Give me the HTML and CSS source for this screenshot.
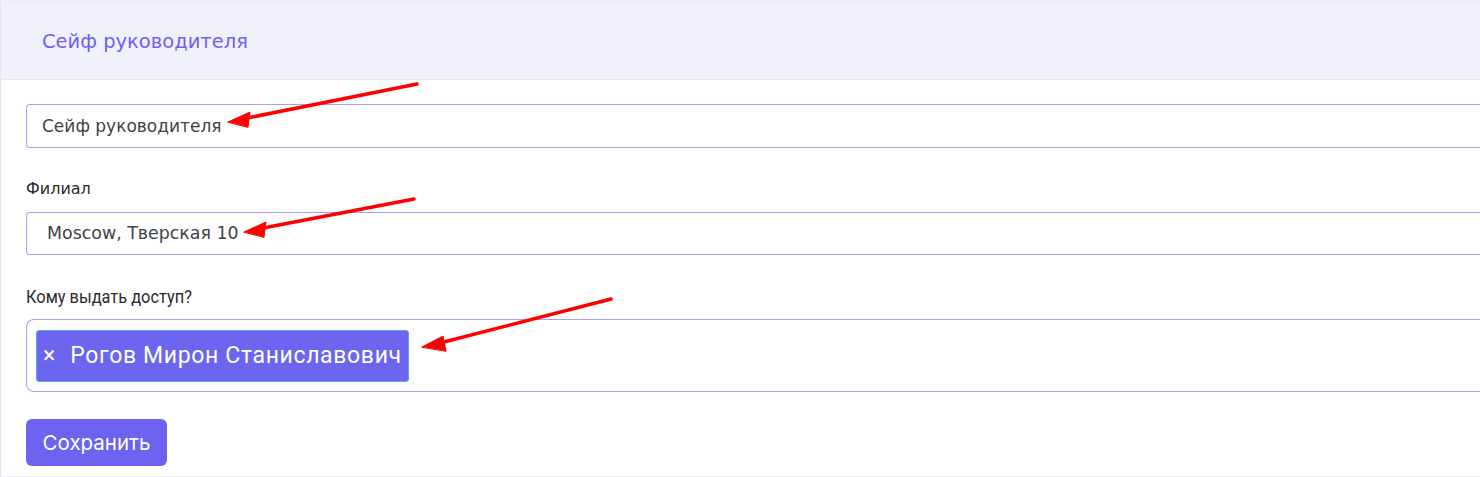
FILE: index.html
```html
<!DOCTYPE html>
<html lang="ru">
<head>
<meta charset="utf-8">
<link rel="stylesheet" href="styles.css">
</head>
<body>
<div class="card">
  <div class="card-header">Сейф руководителя</div>
  <div class="card-body">
    <div class="input">Сейф руководителя</div>
    <div class="label">Филиал</div>
    <div class="input select">Moscow, Тверская 10</div>
    <div class="label label-alt">Кому выдать доступ?</div>
    <div class="multi">
      <span class="tag"><span class="tag-x">×</span>Рогов Мирон Станиславович</span>
    </div>
    <button class="btn">Сохранить</button>
  </div>
</div>
<svg class="arrows" width="1480" height="477" viewBox="0 0 1480 477">
  <g stroke="#ff0000" stroke-width="3.5" stroke-linecap="round" fill="#ff0000">
    <line x1="417" y1="84" x2="242" y2="119"/>
    <polygon points="228,122 250,112 248,127" stroke-width="1"/>
    <line x1="414" y1="199" x2="258" y2="229"/>
    <polygon points="244,232 266,222 264,237" stroke-width="1"/>
    <line x1="611" y1="299" x2="436" y2="344"/>
    <polygon points="422,347 443,336 446,351" stroke-width="1"/>
  </g>
</svg>
</body>
</html>
```
FILE: styles.css
```css
html, body { margin: 0; padding: 0; background: #fff; }
body { width: 1480px; height: 477px; overflow: hidden; position: relative; }
.card {
  border-left: 1px solid #e4e2f7;
  border-top: 1px solid #ebebf5;
  border-bottom: 1px solid #ededf3;
  height: 477px;
  box-sizing: border-box;
}
.card-header {
  background: #f1f1fb;
  height: 79px;
  border-bottom: 1px solid #e5e5f5;
  box-sizing: border-box;
  padding: 29px 0 0 41px;
  font-family: "DejaVu Sans", sans-serif;
  font-size: 19.5px;
  color: #6c63f0;
  line-height: 24px;
}
.card-body { padding: 24px 0 0 25px; }
.label {
  font-family: "DejaVu Sans", sans-serif;
  font-size: 16px;
  color: #2b2b2b;
  line-height: 20px;
  margin: 31px 0 13px;
}
.label-alt {
  font-family: Roboto, sans-serif;
  font-size: 18px;
  line-height: 22px;
  transform: scaleX(0.91);
  transform-origin: left;
  margin: 31px 0 11px;
}
.input {
  height: 44px;
  box-sizing: border-box;
  border: 1px solid #a99ef3;
  border-right: none;
  border-radius: 4px 0 0 4px;
  padding: 0 0 0 15px;
  font-family: "DejaVu Sans", sans-serif;
  font-size: 17px;
  color: #3e4349;
  line-height: 42px;
}
.select { height: 43px; padding-left: 20px; line-height: 41px; font-size: 17.4px; }
.multi {
  height: 73px;
  box-sizing: border-box;
  border: 1px solid #a99ef3;
  border-right: none;
  border-radius: 8px 0 0 8px;
  padding: 10px 0 0 9px;
}
.tag {
  display: inline-flex;
  align-items: center;
  height: 52px;
  box-sizing: border-box;
  background: #6c65ef;
  border: 1px solid #5aa9f0;
  border-radius: 3px;
  padding: 0 0 2px 6px;
  width: 373px;
  font-family: Roboto, sans-serif;
  font-size: 23px;
  letter-spacing: 0.65px;
  color: #fff;
}
.tag-x { font-size: 23px; font-weight: 400; margin-right: 15px; margin-left: 0; letter-spacing: 0; }
.btn {
  display: block;
  margin-top: 27px;
  width: 141px;
  height: 47px;
  background: #6c63f0;
  border: none;
  border-radius: 6px;
  color: #fff;
  font-family: Inter, sans-serif;
  font-size: 20.5px;
  padding: 0;
}
.arrows { position: absolute; left: 0; top: 0; pointer-events: none; }
```
